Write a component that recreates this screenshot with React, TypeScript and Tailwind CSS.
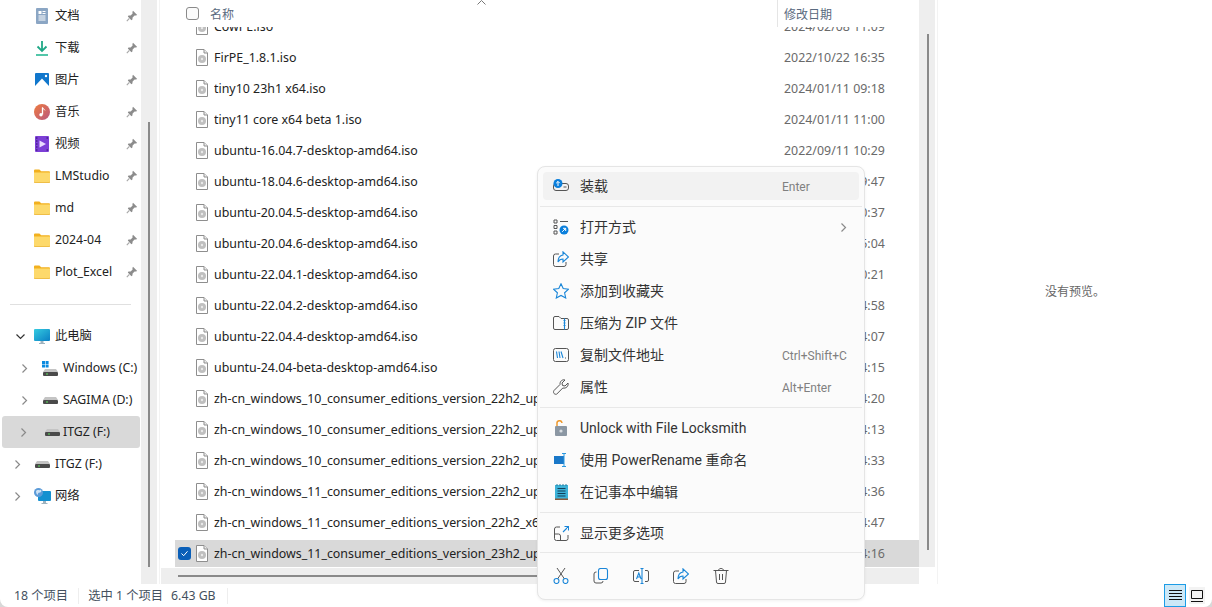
import React from 'react';

const FONT = "[font-family:'Noto_Sans','Noto_Sans_CJK_SC',sans-serif]";

const Pin = () => (
  <svg width="12" height="12" viewBox="0 0 12 12">
    <path d="M7 .8 11.200 5 9.900 5.600 8.600 5.400 6.600 7.500 6.400 9.600 5.400 10.200 1.800 6.600 2.500 5.600 4.600 5.400 6.600 3.400 6.400 2.100Z" fill="#8c8c8c" />
    <path d="M3.400 8.400.8 11.200" stroke="#a8a8a8" strokeWidth="1.200" />
  </svg>
);

const Folder = () => (
  <svg width="16" height="14" viewBox="0 0 16 14">
    <path d="M0 1.500A1 1 0 0 1 1 .5h4.400l1.800 1.700H15a1 1 0 0 1 1 1V5H0Z" fill="#f2b01e" />
    <path d="M0 3.600h16v9a1 1 0 0 1-1 1H1a1 1 0 0 1-1-1Z" fill="#fdd96b" />
    <path d="M0 12.600a1 1 0 0 0 1 1h14a1 1 0 0 0 1-1" fill="none" stroke="#eeb93c" />
  </svg>
);

const DocIcon = () => (
  <svg width="12" height="16" viewBox="0 0 12 16">
    <rect width="12" height="16" rx="1" fill="#8ba6c4" />
    <rect x="2.500" y="3" width="3" height="3" fill="#fff" />
    <path d="M6.500 3.500h3M6.500 5.500h3M2.500 8h7M2.500 10h7M2.500 12h7" stroke="#fff" />
  </svg>
);

const DownloadIcon = () => (
  <svg width="12" height="15" viewBox="0 0 12 15">
    <path d="M6 0v10M1.500 5.500 6 10l4.500-4.500" fill="none" stroke="#1fa886" strokeWidth="1.800" />
    <path d="M0 14h12" stroke="#28b894" strokeWidth="1.600" />
  </svg>
);

const PictureIcon = () => (
  <svg width="14" height="14" viewBox="0 0 14 14">
    <rect width="14" height="14" rx="1" fill="#1177cc" />
    <path d="M0 13 7 5.500 14 13v1H0Z" fill="#fff" />
    <circle cx="11" cy="3" r="1.200" fill="#fff" />
  </svg>
);

const MusicIcon = () => (
  <svg width="16" height="16" viewBox="0 0 16 16">
    <defs>
      <linearGradient id="mus" x1="0" y1="0" x2="1" y2="1">
        <stop offset="0" stopColor="#ee7b3f" />
        <stop offset="1" stopColor="#b9577f" />
      </linearGradient>
    </defs>
    <circle cx="8" cy="8" r="8" fill="url(#mus)" />
    <path d="M8.500 3.500v7" stroke="#fff" strokeWidth="1.300" />
    <path d="M8.500 3.500c.5 1.500 2 1.800 2.500 2.800" stroke="#fff" fill="none" />
    <circle cx="7" cy="10.700" r="1.700" fill="#fff" />
  </svg>
);

const VideoIcon = () => (
  <svg width="14" height="16" viewBox="0 0 14 16">
    <rect width="14" height="16" rx="1" fill="#7c3fd6" />
    <path d="M4.500 4.500 11 8l-6.500 3.500Z" fill="#e9dcff" />
    <path d="M1 2h1.500M1 5h1.500M1 8h1.500M1 11h1.500M1 14h1.500M11.500 2H13M11.500 14H13" stroke="#2d1566" strokeWidth="1.200" />
  </svg>
);

const Drive = () => (
  <svg width="15" height="7" viewBox="0 0 15 7">
    <path d="M2 0h11l2 3H0Z" fill="#c4c4c4" />
    <rect y="3" width="15" height="4" rx="1" fill="#4a4a4a" />
    <rect x="3" y="4.500" width="2" height="1" fill="#5de05d" />
  </svg>
);

const WinDrive = () => (
  <svg width="16" height="15" viewBox="0 0 16 15">
    <path d="M0 0h3v3H0ZM3.600 0h3v3h-3ZM0 3.600h3v3H0ZM3.600 3.600h3v3h-3Z" fill="#0a8ae0" />
    <g transform="translate(1 8)">
      <path d="M2 0h11l2 3H0Z" fill="#c4c4c4" />
      <rect y="3" width="15" height="4" rx="1" fill="#4a4a4a" />
      <rect x="3" y="4.500" width="2" height="1" fill="#5de05d" />
    </g>
  </svg>
);

const PcIcon = () => (
  <svg width="16" height="15" viewBox="0 0 16 15">
    <defs>
      <linearGradient id="pc" x1="0" y1="0" x2="1" y2="1">
        <stop offset="0" stopColor="#35cbe0" />
        <stop offset="1" stopColor="#0a7fc4" />
      </linearGradient>
    </defs>
    <rect width="16" height="12" rx="1" fill="url(#pc)" />
    <path d="M6.500 12h3v2h-3ZM5 14h6v1H5Z" fill="#9fb3bf" />
  </svg>
);

const NetIcon = () => (
  <svg width="17" height="16" viewBox="0 0 17 16">
    <rect x="4" y="3" width="13" height="10" rx="1" fill="#1590d0" />
    <path d="M9 13h3v2H9ZM7.500 15h6v1h-6Z" fill="#9fb3bf" />
    <circle cx="4.500" cy="4.500" r="4.500" fill="#5c9bd8" />
    <path d="M2 3c2-2 3 0 4-1s2 1 1 2-3 0-3 2-2 0-2-3Z" fill="#cfe3f5" />
  </svg>
);

const Chevron = ({ down }: { down?: boolean }) => (
  <svg width="9" height="9" viewBox="0 0 9 9">
    <path
      d={down ? 'M.5 2.500 4.500 6.500l4-4' : 'M2.500.5 6.500 4.500l-4 4'}
      fill="none"
      stroke={down ? '#333' : '#8a8a8a'}
      strokeWidth="1.200"
    />
  </svg>
);

const FileIcon = () => (
  <svg width="12" height="17" viewBox="0 0 12 17">
    <path d="M.5.5h7.500l3.500 3.500v12.500H.5Z" fill="#fff" stroke="#8e8e8e" />
    <path d="M8 .5V4h3.500" fill="#eee" stroke="#8e8e8e" />
    <circle cx="6" cy="10" r="4" fill="#bfbfbf" />
    <circle cx="6" cy="10" r="1.200" fill="#e9e9e9" />
  </svg>
);

const pinned: [React.ReactNode, string][] = [
  [<DocIcon />, '文档'],
  [<DownloadIcon />, '下载'],
  [<PictureIcon />, '图片'],
  [<MusicIcon />, '音乐'],
  [<VideoIcon />, '视频'],
  [<Folder />, 'LMStudio'],
  [<Folder />, 'md'],
  [<Folder />, '2024-04'],
  [<Folder />, 'Plot_Excel'],
];

const files: [string, string][] = [
  ['CowPE.iso', '2024/02/08 11:09'],
  ['FirPE_1.8.1.iso', '2022/10/22 16:35'],
  ['tiny10 23h1 x64.iso', '2024/01/11 09:18'],
  ['tiny11 core x64 beta 1.iso', '2024/01/11 11:00'],
  ['ubuntu-16.04.7-desktop-amd64.iso', '2022/09/11 10:29'],
  ['ubuntu-18.04.6-desktop-amd64.iso', '2022/09/11 09:47'],
  ['ubuntu-20.04.5-desktop-amd64.iso', '2022/09/11 10:37'],
  ['ubuntu-20.04.6-desktop-amd64.iso', '2023/04/12 15:04'],
  ['ubuntu-22.04.1-desktop-amd64.iso', '2022/09/11 10:21'],
  ['ubuntu-22.04.2-desktop-amd64.iso', '2023/04/12 14:58'],
  ['ubuntu-22.04.4-desktop-amd64.iso', '2024/04/12 14:07'],
  ['ubuntu-24.04-beta-desktop-amd64.iso', '2024/04/12 14:15'],
  ['zh-cn_windows_10_consumer_editions_version_22h2_updated_x64.iso', '2024/04/12 14:20'],
  ['zh-cn_windows_10_consumer_editions_version_22h2_updated_x86.iso', '2024/04/12 14:13'],
  ['zh-cn_windows_10_consumer_editions_version_22h2_updated_arm64.iso', '2024/04/12 14:33'],
  ['zh-cn_windows_11_consumer_editions_version_22h2_updated_x64.iso', '2024/04/12 14:36'],
  ['zh-cn_windows_11_consumer_editions_version_22h2_x64_dvd.iso', '2024/04/12 14:47'],
  ['zh-cn_windows_11_consumer_editions_version_23h2_updated_x64.iso', '2024/04/12 14:16'],
];

const Sidebar = () => (
  <div className="w-[141px] flex-none overflow-hidden text-[12.3px] text-[#222]">
    {pinned.map(([icon, label]) => (
      <div key={label} className="flex h-8 items-center">
        <div className="flex w-[55px] flex-none justify-center pl-[28px]">{icon}</div>
        <span className="flex-1">{label}</span>
        <div className="mr-[3px] flex w-3"><Pin /></div>
      </div>
    ))}
    <div className="mx-[10px] mt-[16px] mb-[15px] h-px bg-[#e0e0e0]" />
    <div className="flex h-8 items-center">
      <div className="flex w-[34px] flex-none justify-center pl-[7px]"><Chevron down /></div>
      <div className="flex w-[21px] flex-none"><PcIcon /></div>
      <span>此电脑</span>
    </div>
    <div className="flex h-8 items-center">
      <div className="flex w-[42px] flex-none justify-center pl-[7px]"><Chevron /></div>
      <div className="flex w-[21px] flex-none"><WinDrive /></div>
      <span className="whitespace-nowrap">Windows (C:)</span>
    </div>
    <div className="flex h-8 items-center">
      <div className="flex w-[42px] flex-none justify-center pl-[7px]"><Chevron /></div>
      <div className="flex w-[21px] flex-none pl-[1px]"><Drive /></div>
      <span className="whitespace-nowrap">SAGIMA (D:)</span>
    </div>
    <div className="ml-[2px] flex h-8 w-[138px] items-center rounded-[3px] bg-[#d9d9d9]">
      <div className="flex w-[40px] flex-none justify-center pl-[3px]"><Chevron /></div>
      <div className="flex w-[21px] flex-none pl-[3px]"><Drive /></div>
      <span className="whitespace-nowrap">ITGZ (F:)</span>
    </div>
    <div className="flex h-8 items-center">
      <div className="flex w-[34px] flex-none justify-center"><Chevron /></div>
      <div className="flex w-[21px] flex-none pl-[1px]"><Drive /></div>
      <span className="whitespace-nowrap">ITGZ (F:)</span>
    </div>
    <div className="flex h-8 items-center">
      <div className="flex w-[34px] flex-none justify-center"><Chevron /></div>
      <div className="flex w-[21px] flex-none"><NetIcon /></div>
      <span>网络</span>
    </div>
  </div>
);

const FileList = () => (
  <div className="flex w-[758px] flex-none flex-col overflow-hidden">
    <div className="relative flex h-[27px] flex-none items-center pl-[25px] text-[12px] text-[#5a6a80]">
      <div className="h-[13px] w-[13px] rounded-[3px] border border-[#8a8a8a] bg-[#fbfbfb]" />
      <span className="mt-[2px] ml-[11px] w-[567px]">名称</span>
      <div className="h-full w-px bg-[#e5e5e5]" />
      <span className="mt-[2px] ml-[6px]">修改日期</span>
      <svg className="absolute top-0 left-[316px]" width="9" height="5" viewBox="0 0 9 5">
        <path d="M.5 4.500 4.500.5l4 4" fill="none" stroke="#777" />
      </svg>
    </div>
    <div className="flex-1 overflow-hidden">
      <div className="-mt-[14px] flex flex-col gap-1 text-[12.4px]">
        {files.map(([name, date], i) => {
          const selected = i === files.length - 1;
          return (
            <div
              key={name}
              className={`ml-[14px] flex h-[27px] flex-none items-center ${selected ? 'bg-[#d9d9d9]' : ''}`}
            >
              <div className="flex w-[21px] flex-none pl-[3px]">
                {selected && (
                  <div className="flex h-[13px] w-[13px] items-center justify-center rounded-[3px] bg-[#0a5fb8]">
                    <svg width="9" height="9" viewBox="0 0 9 9">
                      <path d="M1.500 4.500 3.700 6.700 7.500 2.300" fill="none" stroke="#fff" />
                    </svg>
                  </div>
                )}
              </div>
              <div className="flex w-[18px] flex-none"><FileIcon /></div>
              <div className="w-[570px] flex-none overflow-hidden whitespace-nowrap pt-px text-[#222]">{name}</div>
              <span className="whitespace-nowrap pt-px text-[#6a6a6a]">{date}</span>
            </div>
          );
        })}
      </div>
    </div>
  </div>
);

type MenuRow = { icon: React.ReactNode; label: string; hint?: string; hover?: boolean; more?: boolean };

const stroke = { fill: 'none', stroke: '#555', strokeWidth: 1 };
const blue = { fill: 'none', stroke: '#1a86d8', strokeWidth: 1.100 };

const groups: MenuRow[][] = [
  [
    {
      icon: (
        <svg width="16" height="16" viewBox="0 0 16 16">
          <rect x=".5" y="5.500" width="15" height="7" rx="2.500" {...stroke} />
          <path d="M10.500 9h3" {...stroke} />
          <circle cx="5" cy="5.500" r="4.500" fill="#0a7fdc" />
          <path d="M5 8V3.500M3.200 5.200 5 3.400l1.800 1.800" fill="none" stroke="#fff" />
        </svg>
      ),
      label: '装载',
      hint: 'Enter',
      hover: true,
    },
  ],
  [
    {
      icon: (
        <svg width="16" height="16" viewBox="0 0 16 16">
          <path d="M1 1h3v3H1ZM1 6.500h3v3H1ZM1 12h3v3H1ZM7 2.500h8" {...stroke} />
          <circle cx="11" cy="11" r="4.500" fill="#0a7fdc" />
          <path d="M9.200 12.800 12.600 9.400M10 9.300h2.700V12" fill="none" stroke="#fff" />
        </svg>
      ),
      label: '打开方式',
      more: true,
    },
    {
      icon: (
        <svg width="16" height="16" viewBox="0 0 16 16">
          <path d="M6 3H2.500a2 2 0 0 0-2 2v8.500a2 2 0 0 0 2 2H11a2 2 0 0 0 2-2V11" {...stroke} />
          <path d="M10 .8 15.500 6 10 11V8c-2.500 0-4 1-5 3 0-4 2-6.500 5-7Z" {...blue} />
        </svg>
      ),
      label: '共享',
    },
    {
      icon: (
        <svg width="16" height="16" viewBox="0 0 16 16">
          <path d="M8 .8 10.200 5.600 15.500 6.200 11.600 9.800 12.700 15 8 12.400 3.300 15 4.400 9.800.5 6.200 5.800 5.600Z" {...blue} />
        </svg>
      ),
      label: '添加到收藏夹',
    },
    {
      icon: (
        <svg width="16" height="16" viewBox="0 0 16 16">
          <path d="M.5 3a1.500 1.500 0 0 1 1.500-1.500h4L8 3.500h6A1.500 1.500 0 0 1 15.500 5v8a1.500 1.500 0 0 1-1.500 1.500H2A1.500 1.500 0 0 1 .5 13Z" {...stroke} />
          <path d="M11.500 3.500v11M10.500 5.500h2M10.500 8h2M10.500 10.500h2" {...blue} />
        </svg>
      ),
      label: '压缩为 ZIP 文件',
    },
    {
      icon: (
        <svg width="16" height="14" viewBox="0 0 16 14">
          <rect x=".5" y=".5" width="15" height="13" rx="2" {...stroke} />
          <path d="M3.500 3.500 4.500 10M6 3.500 7 10M8 3.500 10 10" {...blue} />
          <path d="M12 10h1" {...stroke} />
        </svg>
      ),
      label: '复制文件地址',
      hint: 'Ctrl+Shift+C',
    },
    {
      icon: (
        <svg width="16" height="16" viewBox="0 0 16 16">
          <path d="M15 4 12 7 9.500 6.500 9 4l3-3C9.500.2 6.800 2 7 5.500L1 11.500C0 13 .5 15.500 3.500 15.300L9.800 9c3.400.8 6-2 5.200-5Z" {...stroke} />
        </svg>
      ),
      label: '属性',
      hint: 'Alt+Enter',
    },
  ],
  [
    {
      icon: (
        <svg width="14" height="16" viewBox="0 0 14 16">
          <path d="M3 6V3.500a2.500 2.500 0 0 1 5-.5" fill="none" stroke="#ee9a2e" strokeWidth="1.500" />
          <rect x="1" y="6" width="12" height="10" rx="1" fill="#8b97a3" />
          <circle cx="7" cy="11" r="1.600" fill="#d8dde2" />
        </svg>
      ),
      label: 'Unlock with File Locksmith',
    },
    {
      icon: (
        <svg width="14" height="14" viewBox="0 0 14 14">
          <rect y="3" width="10" height="8" fill="#1a78c8" />
          <path d="M10 .5V13.500M8 .5h4M8 13.500h4" fill="none" stroke="#2a98e0" />
        </svg>
      ),
      label: '使用 PowerRename 重命名',
    },
    {
      icon: (
        <svg width="13" height="16" viewBox="0 0 13 16">
          <rect y="1" width="13" height="15" fill="#3cb2d8" />
          <rect y="14.500" width="13" height="1.500" fill="#8a5a3a" />
          <path d="M2.500 4.500h8M2.500 7h8M2.500 9.500h8M2.500 12h8" stroke="#123f58" />
          <path d="M2 0v2M5 0v2M8 0v2M11 0v2" stroke="#2a7ea0" />
        </svg>
      ),
      label: '在记事本中编辑',
    },
  ],
  [
    {
      icon: (
        <svg width="15" height="15" viewBox="0 0 15 15">
          <path d="M6 1H2.500a2 2 0 0 0-2 2v9.500a2 2 0 0 0 2 2H12a2 2 0 0 0 2-2V9M.5 8h4a2 2 0 0 1 2 2v4.500" {...stroke} />
          <path d="M9 6 14.500.5M10.500.5h4v4" {...blue} />
        </svg>
      ),
      label: '显示更多选项',
    },
  ],
];

const ContextMenu = () => (
  <div className="absolute top-[166px] left-[537px] h-[434px] w-[328px] rounded-[8px] border border-[#e5e5e5] bg-[#fbfbfb] px-[2px] pt-[5px] [font-family:'Roboto','Noto_Sans_CJK_SC',sans-serif] text-[14px] text-[#333] shadow-[0_1px_3px_rgba(0,0,0,0.06)]">
    {groups.map((rows, g) => (
      <div key={g}>
        {g > 0 && <div className="my-[6px] h-px bg-[#e8e8e8]" />}
        <div className="flex flex-col gap-1">
          {rows.map(r => (
            <div
              key={r.label}
              className={`mx-[3px] flex h-[28px] items-center rounded-[4px] ${r.hover ? 'bg-[#f2f2f2]' : ''}`}
            >
              <div className="flex w-[37px] flex-none justify-center pr-[1px]">{r.icon}</div>
              <span className="flex-1 whitespace-nowrap">{r.label}</span>
              {r.hint && <span className="w-[77px] pt-px text-[12px] text-[#808080]">{r.hint}</span>}
              {r.more && (
                <div className="mr-[11px]">
                  <Chevron />
                </div>
              )}
            </div>
          ))}
        </div>
      </div>
    ))}
    <div className="mt-[5px] mb-[6px] h-px bg-[#e8e8e8]" />
    <div className="flex h-[34px] items-center gap-[24px] pl-[13px]">
      <svg width="16" height="16" viewBox="0 0 16 16">
        <path d="M4 0l7.500 11M12 0 4.500 11" {...stroke} />
        <circle cx="3.500" cy="13" r="2.500" {...blue} />
        <circle cx="12.500" cy="13" r="2.500" {...blue} />
      </svg>
      <svg width="16" height="16" viewBox="0 0 16 16">
        <rect x="5.500" y=".5" width="9" height="11" rx="2" {...blue} />
        <path d="M3.500 4H3a2 2 0 0 0-2 2v7a2 2 0 0 0 2 2h5a2 2 0 0 0 2-2" {...stroke} />
      </svg>
      <svg width="16" height="16" viewBox="0 0 16 16">
        <path d="M6 2.500H2a1.500 1.500 0 0 0-1.500 1.500v8A1.500 1.500 0 0 0 2 13.500h4M12 2.500h2A1.500 1.500 0 0 1 15.500 4v8a1.500 1.500 0 0 1-1.500 1.500h-2" {...stroke} />
        <path d="M9 .5v15M7.500.5h3M7.500 15.500h3M3.500 11 5.800 5l2.300 6M4.300 9h3" {...blue} />
      </svg>
      <svg width="16" height="16" viewBox="0 0 16 16">
        <path d="M6 3H2.500a2 2 0 0 0-2 2v8.500a2 2 0 0 0 2 2H11a2 2 0 0 0 2-2V11" {...stroke} />
        <path d="M10 .8 15.500 6 10 11V8c-2.500 0-4 1-5 3 0-4 2-6.500 5-7Z" {...blue} />
      </svg>
      <svg width="16" height="16" viewBox="0 0 16 16">
        <path d="M.5 2.500h15M5.500 2.500c0-2.700 5-2.700 5 0M2.500 2.500l1 11.500a1.500 1.500 0 0 0 1.500 1.500h6a1.500 1.500 0 0 0 1.500-1.500l1-11.500M6.500 6v6M9.500 6v6" {...stroke} />
      </svg>
    </div>
  </div>
);

export default function App() {
  return (
    <div className={`relative flex h-[607px] w-[1212px] flex-col overflow-hidden bg-[#d8d8d8] ${FONT}`}>
      <div className="flex h-full flex-col overflow-hidden rounded-b-[8px] bg-white">
        <div className="flex h-[584px] flex-none">
          <Sidebar />
          <div className="flex w-4 flex-none justify-center bg-[#eeeeee]">
            <div className="mt-[122px] h-[445px] w-[2px] bg-[#8a8a8a]" />
          </div>
          <div className="ml-[2px] w-px flex-none bg-[#f3f3f3]" />
          <div className="flex w-[776px] flex-none flex-col pl-px">
            <div className="flex h-[567px] flex-none">
              <FileList />
              <div className="flex w-4 flex-none justify-center bg-[#eeeeee] pl-[1px]">
                <div className="mt-[34px] h-[516px] w-[2px] bg-[#8a8a8a]" />
              </div>
            </div>
            <div className="mt-px flex h-4 w-[758px] flex-none items-center bg-[#eeeeee] pl-[17px]">
              <div className="h-[2px] w-[480px] bg-[#8a8a8a]" />
            </div>
          </div>
          <div className="ml-[1px] w-px flex-none bg-[#f3f3f3]" />
          <div className="flex flex-1 items-center justify-center text-[12px] text-[#666]">
            <span>没有预览。</span>
          </div>
        </div>
        <div className="flex h-[23px] flex-none items-center pt-px text-[12.3px] text-[#44505e]">
          <span className="ml-[14px]">18 个项目</span>
          <div className="ml-[10px] h-[16px] w-px bg-[#eeeeee]" />
          <span className="ml-[9px]">选中 1 个项目</span>
          <span className="ml-[8px]">6.43 GB</span>
          <div className="ml-[11px] h-[16px] w-px bg-[#eeeeee]" />
          <div className="ml-auto -mt-px flex h-full items-center pr-[7px]">
            <div className="flex h-[23px] w-[22px] items-center justify-center border border-[#1c9ce6] bg-[#cce8f7]">
              <svg width="13" height="11" viewBox="0 0 13 11">
                <path d="M0 .5h13M0 3.500h13M0 6.500h13M0 9.500h13" stroke="#111" />
              </svg>
            </div>
            <div className="ml-[3px] flex h-[17px] w-[16px] items-center justify-center bg-[#f3f3f3]">
              <svg width="12" height="12" viewBox="0 0 12 12">
                <path d="M.5.5h11v8H.5ZM0 11.500h12" fill="none" stroke="#111" />
              </svg>
            </div>
          </div>
        </div>
      </div>
      <ContextMenu />
    </div>
  );
}
